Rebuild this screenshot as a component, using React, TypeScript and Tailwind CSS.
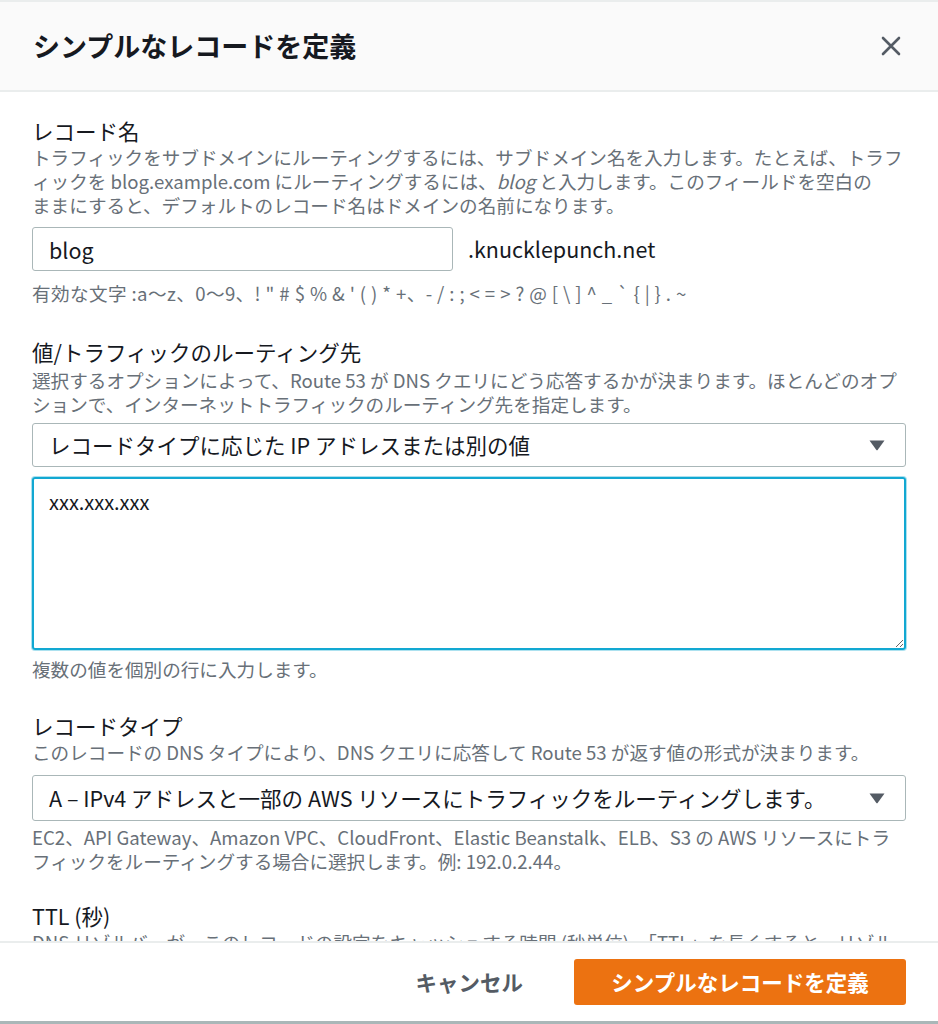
import { ChangeEvent, useState } from "react";

const validChars =
  "有効な文字 :a～z、0～9、! \" # $ % & ' ( ) * +、- / : ; < = > ? @ [ \\ ] ^ _ ` { | } . ~";

const CaretDown = () => (
  <svg width="16" height="11" viewBox="0 0 16 11" className="shrink-0">
    <path d="M0.5 0.5 H15.5 L8.8 9.8 Q8 10.8 7.2 9.8 Z" fill="#545b64" />
  </svg>
);

const Select = ({ value, height }: { value: string; height: string }) => (
  <div
    className={`flex items-center justify-between rounded-[3px] border border-[#aab7b8] bg-white pl-[16px] pr-[20px] ${height}`}
  >
    <span className="text-[21.5px] text-[#16191f]">{value}</span>
    <CaretDown />
  </div>
);

const Label = ({ children }: { children: string }) => (
  <div className="text-[21.5px] leading-[28px] text-[#16191f]">{children}</div>
);

export default function App() {
  const [name, setName] = useState("blog");
  const [values, setValues] = useState("xxx.xxx.xxx");

  return (
    <div className="flex h-[1024px] w-full flex-col overflow-hidden border-t-2 border-[#eaeded] bg-white font-['Noto_Sans_CJK_JP','Noto_Sans',sans-serif]">
      {/* Header */}
      <div className="flex h-[90px] shrink-0 items-center justify-between border-b-2 border-[#eaeded] bg-[#fafafa] pl-[33px] pr-[36px]">
        <h1 className="text-[27px] font-bold text-[#16191f]">シンプルなレコードを定義</h1>
        <button className="text-[#545b64]">
          <svg width="22" height="22" viewBox="0 0 22 22">
            <path d="M3 3 L19 19 M19 3 L3 19" stroke="#545b64" strokeWidth="2.6" strokeLinecap="round" />
          </svg>
        </button>
      </div>

      {/* Body */}
      <div className="flex-1 overflow-hidden px-[32px] pt-[25px]">
        {/* Record name */}
        <Label>レコード名</Label>
        <p className="text-[18.6px] leading-[24px] text-[#687078]">
          トラフィックをサブドメインにルーティングするには、サブドメイン名を入力します。たとえば、トラフィックを blog.example.com にルーティングするには、<i>blog</i> と入力します。このフィールドを空白の
          <br />
          ままにすると、デフォルトのレコード名はドメインの名前になります。
        </p>
        <div className="mt-[10px] flex items-center gap-[15px]">
          <input
            value={name}
            onChange={(e: ChangeEvent<HTMLInputElement>) => setName(e.target.value)}
            className="h-[44px] w-[421px] rounded-[3px] border border-[#aab7b8] px-[16px] text-[21.5px] text-[#16191f] outline-none"
          />
          <span className="text-[21.5px] text-[#16191f]">.knucklepunch.net</span>
        </div>
        <p className="mt-[10px] text-[18.6px] leading-[24px] tracking-[0.4px] text-[#687078]">{validChars}</p>

        {/* Routing target */}
        <div className="mt-[33px]">
          <Label>値/トラフィックのルーティング先</Label>
        </div>
        <p className="mt-[2px] text-[18.6px] leading-[24px] text-[#687078]">
          選択するオプションによって、Route 53 が DNS クエリにどう応答するかが決まります。ほとんどのオプションで、インターネットトラフィックのルーティング先を指定します。
        </p>
        <div className="mt-[7px]">
          <Select value="レコードタイプに応じた IP アドレスまたは別の値" height="h-[44px]" />
        </div>
        <textarea
          value={values}
          onChange={(e: ChangeEvent<HTMLTextAreaElement>) => setValues(e.target.value)}
          className="mt-[10px] block h-[173px] w-full rounded-[3px] border-2 border-[#12a8d2] px-[15px] py-[9px] text-[20px] leading-[28px] text-[#16191f] shadow-[0_0_0_1px_rgba(18,168,210,0.35)] outline-none"
        />
        <p className="mt-[7px] text-[18.6px] leading-[24px] text-[#687078]">複数の値を個別の行に入力します。</p>

        {/* Record type */}
        <div className="mt-[31px]">
          <Label>レコードタイプ</Label>
        </div>
        <p className="text-[18.6px] leading-[24px] text-[#687078]">
          このレコードの DNS タイプにより、DNS クエリに応答して Route 53 が返す値の形式が決まります。
        </p>
        <div className="mt-[11px]">
          <Select
            value="A – IPv4 アドレスと一部の AWS リソースにトラフィックをルーティングします。"
            height="h-[46px]"
          />
        </div>
        <p className="mt-[4px] text-[18.6px] leading-[24px] text-[#687078]">
          EC2、API Gateway、Amazon VPC、CloudFront、Elastic Beanstalk、ELB、S3 の AWS リソースにトラフィックをルーティングする場合に選択します。例: 192.0.2.44。
        </p>

        {/* TTL */}
        <div className="mt-[29px]">
          <Label>TTL (秒)</Label>
        </div>
        <p className="text-[18.6px] leading-[24px] text-[#687078]">
          DNS リゾルバーが、このレコードの設定をキャッシュする時間 (秒単位)。「TTL」を長くすると、リゾルバーがこのレコードをキャッシュする時間が長くなります。
        </p>
      </div>

      {/* Footer */}
      <div className="flex h-[80px] shrink-0 items-center justify-end gap-[51px] border-t-2 border-[#eaeded] bg-white pr-[32px]">
        <button className="text-[21.5px] font-bold text-[#545b64]">キャンセル</button>
        <button className="h-[46px] w-[332px] rounded-[3px] bg-[#ec7211] text-[21.5px] font-bold text-white">
          シンプルなレコードを定義
        </button>
      </div>
      <div className="h-[3px] shrink-0 bg-[#aab7b8]" />
    </div>
  );
}
